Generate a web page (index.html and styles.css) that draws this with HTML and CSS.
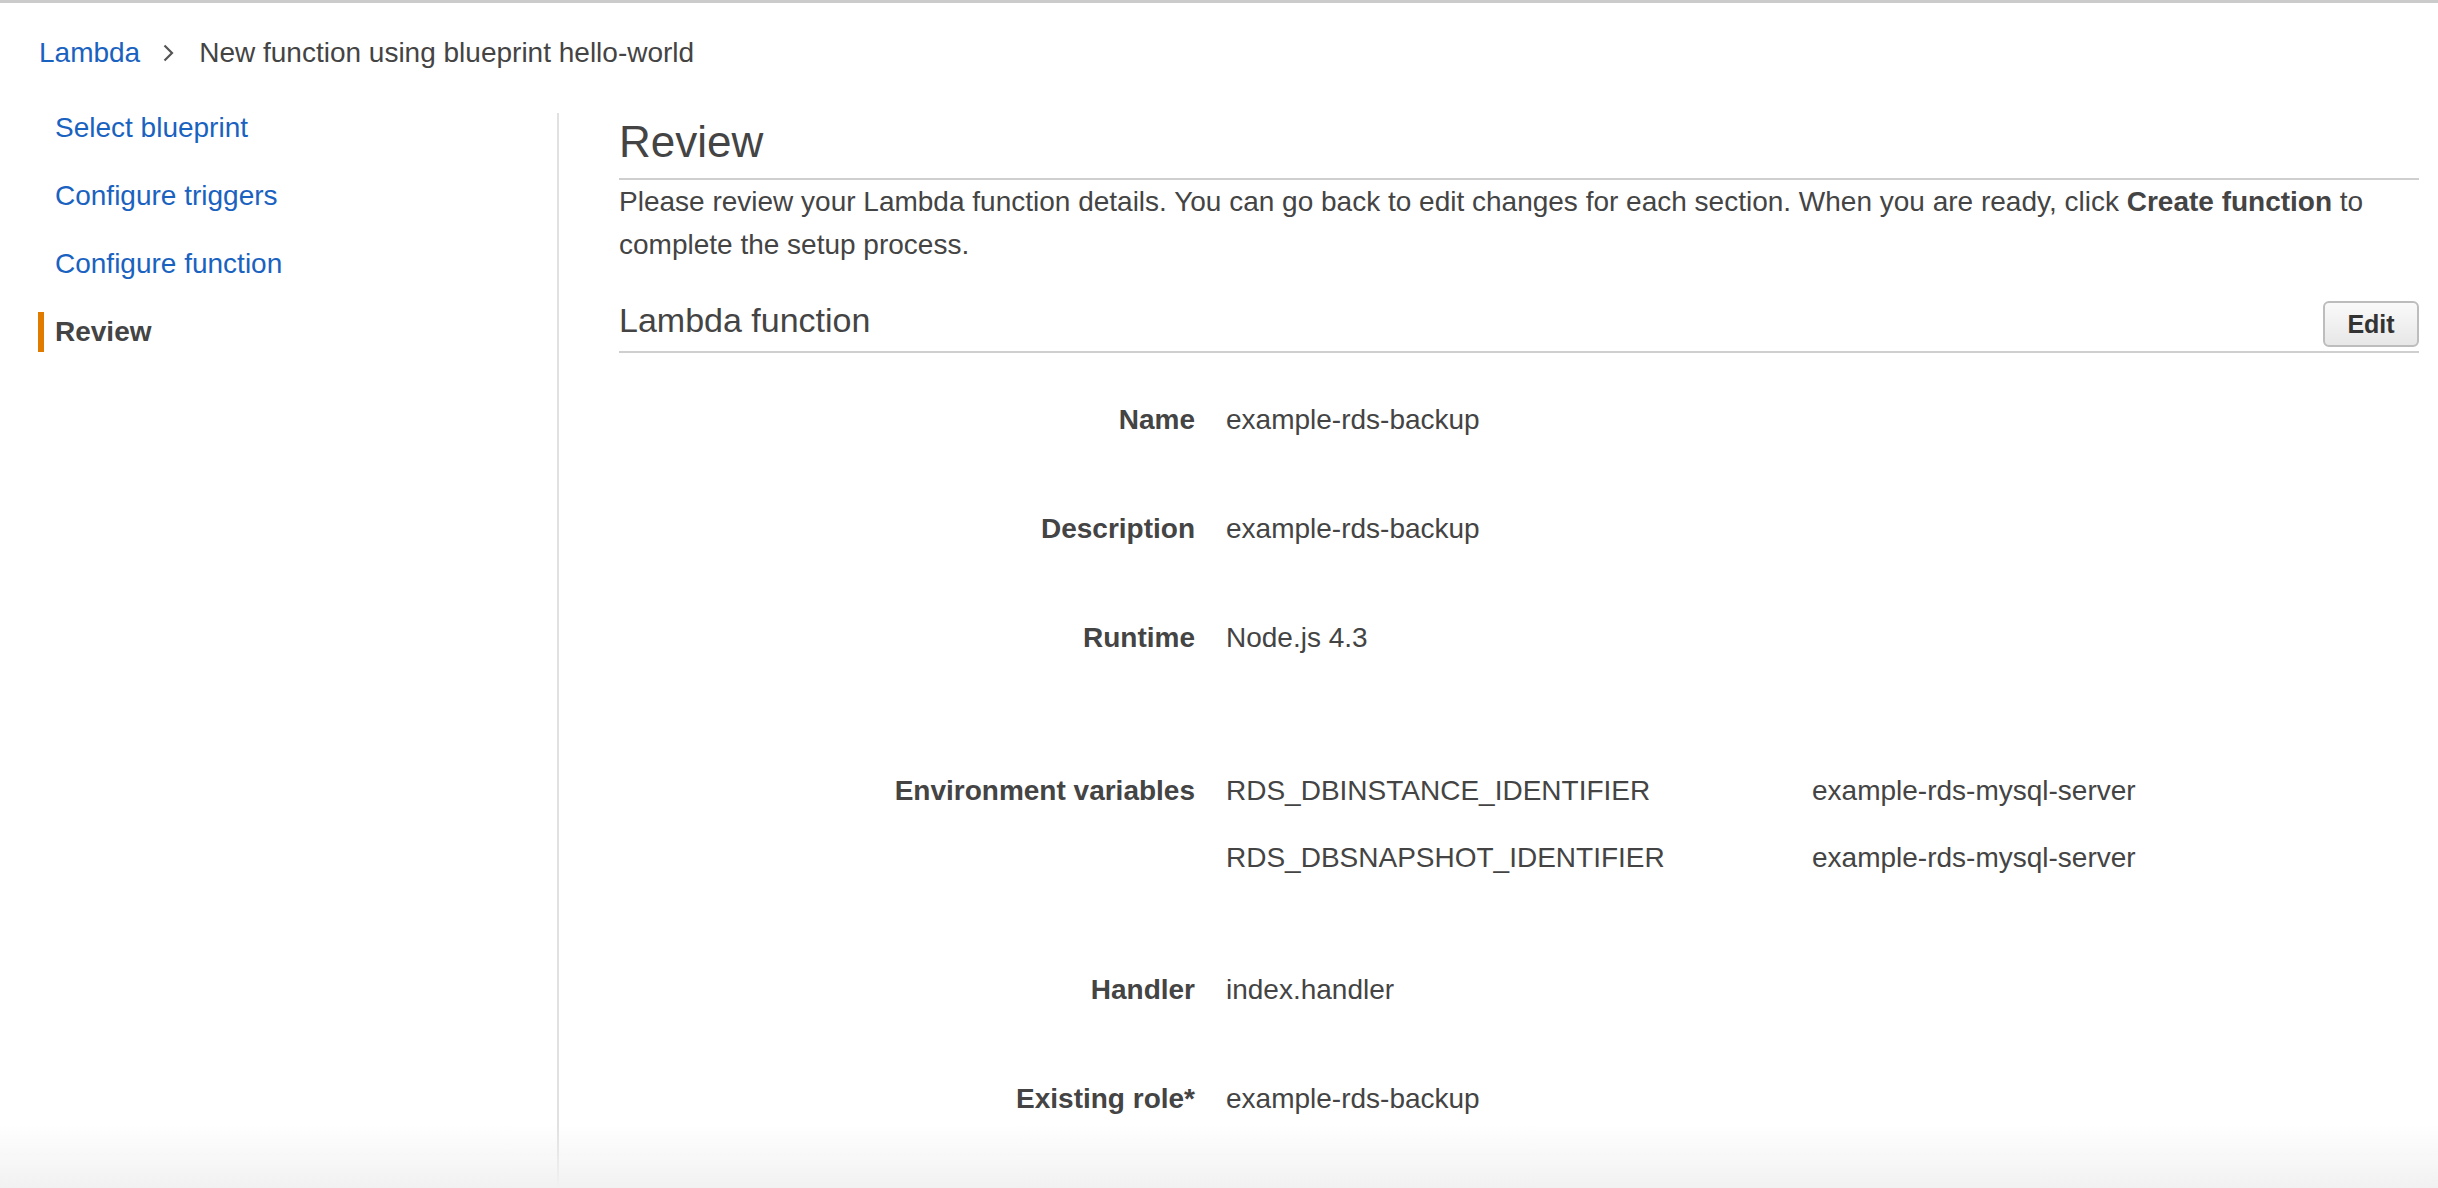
FILE: index.html
```html
<!DOCTYPE html>
<html lang="en">
<head>
<meta charset="utf-8">
<title>New function using blueprint hello-world</title>
<link rel="stylesheet" href="styles.css">
</head>
<body>
<div class="page">
  <nav class="breadcrumb">
    <a class="crumb-link" href="#">Lambda</a>
    <svg class="chevron" width="11" height="18" viewBox="0 0 11 18"><polyline points="1.5,1.5 9,9 1.5,16.5" fill="none" stroke="#555" stroke-width="2.2"/></svg>
    <span class="crumb-current">New function using blueprint hello-world</span>
  </nav>
  <div class="layout">
    <aside class="sidebar">
      <a class="step" href="#">Select blueprint</a>
      <a class="step" href="#">Configure triggers</a>
      <a class="step" href="#">Configure function</a>
      <span class="step active">Review</span>
    </aside>
    <main class="main">
      <h1 class="title">Review</h1>
      <p class="intro">Please review your Lambda function details. You can go back to edit changes for each section. When you are ready, click <b>Create function</b> to complete the setup process.</p>
      <div class="section-head">
        <h2 class="section-title">Lambda function</h2>
        <button class="btn">Edit</button>
      </div>
      <div class="details">
        <div class="row"><div class="label">Name</div><div class="value">example-rds-backup</div></div>
        <div class="row"><div class="label">Description</div><div class="value">example-rds-backup</div></div>
        <div class="row"><div class="label">Runtime</div><div class="value">Node.js 4.3</div></div>
        <div class="row env">
          <div class="label">Environment variables</div>
          <div class="env-list">
            <div class="env-item"><span class="env-key">RDS_DBINSTANCE_IDENTIFIER</span><span class="env-val">example-rds-mysql-server</span></div>
            <div class="env-item"><span class="env-key">RDS_DBSNAPSHOT_IDENTIFIER</span><span class="env-val">example-rds-mysql-server</span></div>
          </div>
        </div>
        <div class="row"><div class="label">Handler</div><div class="value">index.handler</div></div>
        <div class="row"><div class="label">Existing role*</div><div class="value">example-rds-backup</div></div>
      </div>
    </main>
  </div>
</div>
<div class="bottom-fade"></div>
</body>
</html>
```

FILE: styles.css
```css
html, body {
  margin: 0;
  padding: 0;
  height: 100%;
  overflow: hidden;
}
body {
  font-family: "Liberation Sans", Arial, Helvetica, sans-serif;
  color: #444;
  background: #fff;
  border-top: 3px solid #cbcbcb;
  box-sizing: border-box;
}
.page {
  display: flex;
  flex-direction: column;
  height: 100%;
}
.breadcrumb {
  display: flex;
  align-items: center;
  padding-left: 39px;
  margin-top: 30px;
  height: 40px;
  font-size: 28px;
  line-height: 40px;
}
.crumb-link {
  color: #1a62c0;
  text-decoration: none;
}
.chevron {
  margin: 0 25px 0 23px;
}
.crumb-current {
  color: #444;
}
.layout {
  display: flex;
  flex: 1;
  margin-top: 35px;
}
.sidebar {
  width: 519px;
  padding-left: 38px;
  display: flex;
  flex-direction: column;
  gap: 28px;
  font-size: 28px;
  line-height: 40px;
}
.step {
  display: block;
  height: 40px;
  padding-left: 17px;
  color: #1a62c0;
  text-decoration: none;
}
.step.active {
  border-left: 6px solid #e07b00;
  padding-left: 11px;
  color: #444;
  font-weight: bold;
}
.main {
  flex: 1;
  margin-top: 5px;
  border-left: 2px solid #e1e1e1;
  padding: 3px 19px 0 60px;
}
.title {
  margin: 0;
  font-size: 44px;
  line-height: 52px;
  font-weight: normal;
  padding-bottom: 10px;
  border-bottom: 2px solid #cfcfcf;
}
.intro {
  margin: 0;
  font-size: 28px;
  line-height: 43px;
}
.section-head {
  display: flex;
  align-items: flex-end;
  justify-content: space-between;
  margin-top: 34px;
  padding-bottom: 4px;
  border-bottom: 2px solid #cfcfcf;
}
.section-title {
  margin: 0;
  font-size: 34px;
  line-height: 40px;
  font-weight: normal;
  padding-bottom: 7px;
}
.btn {
  font-family: "Liberation Sans", Arial, sans-serif;
  font-size: 25px;
  font-weight: bold;
  color: #333;
  width: 96px;
  height: 46px;
  padding: 0;
  border: 2px solid #bdbdbd;
  border-radius: 6px;
  background: linear-gradient(#fafafa, #e7e7e7);
}
.details {
  padding-top: 47px;
  font-size: 28px;
  line-height: 40px;
}
.row {
  display: flex;
  gap: 31px;
  margin-bottom: 69px;
}
.row.env {
  padding-top: 44px;
  padding-bottom: 23px;
}
.label {
  width: 576px;
  flex: none;
  text-align: right;
  font-weight: bold;
  color: #444;
}
.value {
  color: #444;
}
.env-list {
  display: flex;
  flex-direction: column;
  gap: 27px;
}
.env-item {
  display: flex;
}
.env-key {
  width: 586px;
  flex: none;
}
.bottom-fade {
  position: fixed;
  left: 0;
  right: 0;
  bottom: 0;
  height: 64px;
  background: linear-gradient(rgba(242,242,242,0), #f1f1f1);
  pointer-events: none;
}
```
